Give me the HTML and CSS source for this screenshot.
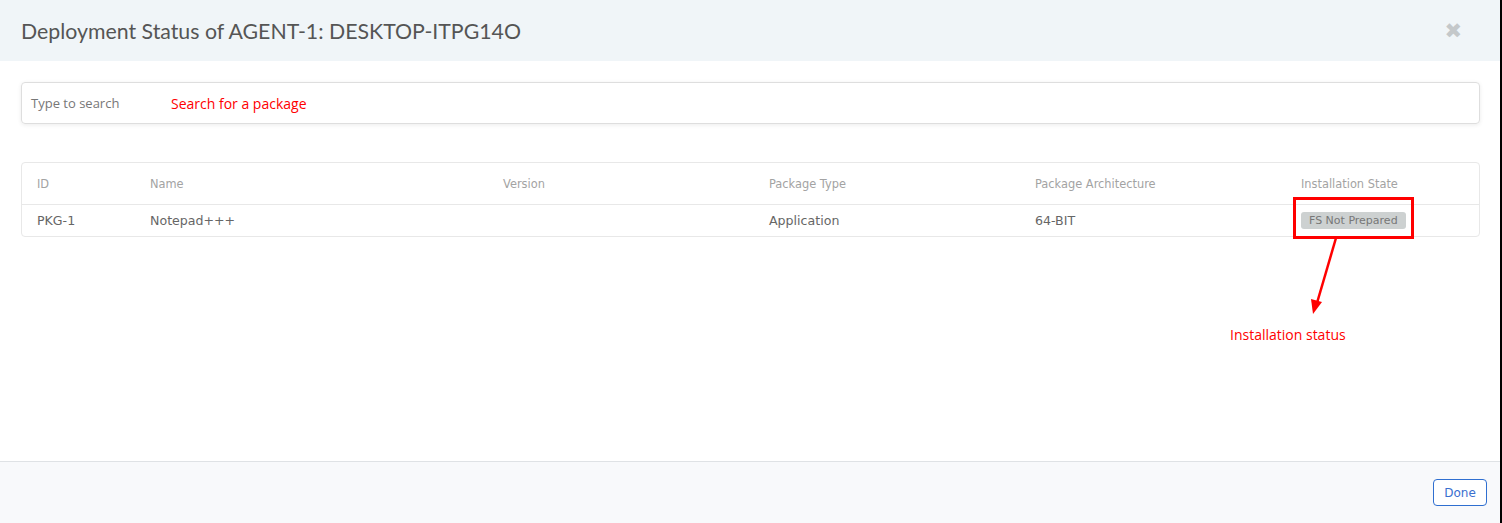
FILE: index.html
```html
<!DOCTYPE html>
<html lang="en">
<head>
    <meta charset="UTF-8">
    <meta name="viewport" content="width=device-width, initial-scale=1.0">
    <title>Deployment Status</title>
    <link rel="stylesheet" href="styles.css">
</head>
<body>
    <div class="modal">
        <div class="modal-header">
            <h1>Deployment Status of AGENT-1: DESKTOP-ITPG14O</h1>
            <span class="close">&#10006;</span>
        </div>
        <div class="modal-body">
            <div class="search">
                <span class="placeholder">Type to search</span>
                <span class="note">Search for a package</span>
            </div>
            <div class="table">
                <div class="row head">
                    <div class="c-id">ID</div>
                    <div class="c-name">Name</div>
                    <div class="c-ver">Version</div>
                    <div class="c-type">Package Type</div>
                    <div class="c-arch">Package Architecture</div>
                    <div class="c-state">Installation State</div>
                </div>
                <div class="row">
                    <div class="c-id">PKG-1</div>
                    <div class="c-name">Notepad+++</div>
                    <div class="c-ver"></div>
                    <div class="c-type">Application</div>
                    <div class="c-arch">64-BIT</div>
                    <div class="c-state"><span class="badge">FS Not Prepared</span></div>
                </div>
            </div>
            <div class="mark"></div>
            <svg class="arrow" width="40" height="80" viewBox="0 0 40 80">
                <line x1="29" y1="1" x2="10" y2="66" stroke="#f00" stroke-width="2.5"/>
                <polygon points="6,77 4,62 15,65" fill="#f00"/>
            </svg>
            <span class="note status-note">Installation status</span>
        </div>
        <div class="modal-footer">
            <button>Done</button>
        </div>
    </div>
</body>
</html>
```

FILE: styles.css
```css
body {
    margin: 0;
    background: #000;
    font-family: 'DejaVu Sans', Verdana, sans-serif;
}
.modal {
    width: 1500px;
    height: 523px;
    background: #fff;
    display: flex;
    flex-direction: column;
}
.modal-header {
    height: 61px;
    background: #f0f5f8;
    display: flex;
    align-items: center;
    justify-content: space-between;
    padding: 0 38px 0 21px;
}
h1 {
    margin: 0;
    font-family: Lato, sans-serif;
    font-weight: normal;
    font-size: 21.3px;
    color: #555;
}
.close {
    color: #c4c8ca;
    font-size: 21px;
    font-weight: bold;
}
.modal-body {
    flex: 1;
    position: relative;
    padding: 21px 20px 0 21px;
}
.search {
    height: 40px;
    border: 1px solid #dedede;
    border-radius: 4px;
    box-shadow: 0 1px 4px rgba(0, 0, 0, 0.08);
    display: flex;
    align-items: center;
    padding-left: 9px;
}
.placeholder {
    font-family: 'Open Sans', sans-serif;
    font-size: 13px;
    color: #777;
    width: 140px;
}
.note {
    font-family: 'Open Sans', sans-serif;
    font-size: 14px;
    color: #f00;
}
.table {
    margin-top: 38px;
    border: 1px solid #e8e8e8;
    border-radius: 4px;
}
.row {
    display: flex;
    align-items: center;
    height: 31px;
    font-size: 12.6px;
    color: #666;
}
.row.head {
    height: 41px;
    font-size: 11.4px;
    color: #a3a3a3;
    border-bottom: 1px solid #e8e8e8;
}
.row > div {
    padding-left: 15px;
    box-sizing: border-box;
}
.c-id { width: 113px; }
.c-name { width: 353px; }
.c-ver { width: 266px; }
.c-type { width: 266px; }
.c-arch { width: 266px; }
.c-state { flex: 1; }
.badge {
    display: inline-block;
    background: #cdd1d1;
    color: #777;
    font-size: 11px;
    border-radius: 3px;
    padding: 2px 8px 2px 8px;
}
.mark {
    position: absolute;
    left: 1293px;
    top: 136px;
    width: 115px;
    height: 36px;
    border: 3px solid #f00;
}
.arrow {
    position: absolute;
    left: 1307px;
    top: 176px;
}
.status-note {
    position: absolute;
    left: 1230px;
    top: 264px;
}
.modal-footer {
    height: 61px;
    background: #f8f9fb;
    border-top: 1px solid #dfe2e5;
    display: flex;
    align-items: center;
    justify-content: flex-end;
    padding-right: 13px;
}
button {
    font-family: 'DejaVu Sans', sans-serif;
    font-size: 12px;
    color: #3a6fcf;
    background: #fff;
    border: 1px solid #2f6fd0;
    border-radius: 4px;
    width: 54px;
    height: 27px;
    padding: 0;
}
```
